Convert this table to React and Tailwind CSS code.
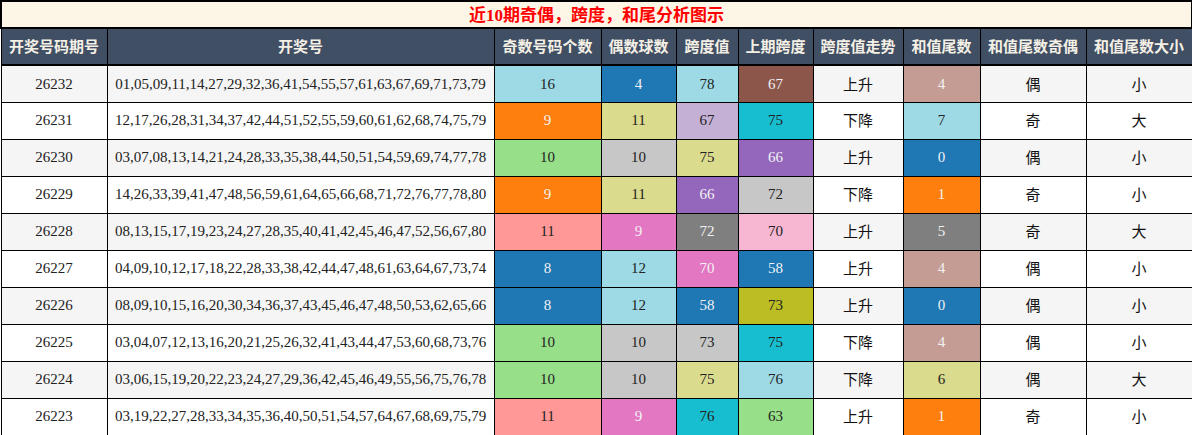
import React from "react";

const D = "text-[#f2f2f2]";
const L = "text-[#222222]";
const C = {
  lc: `bg-[#9edae5] ${L}`,
  bl: `bg-[#1f77b4] ${D}`,
  br: `bg-[#8c564b] ${D}`,
  lb: `bg-[#c49c94] ${D}`,
  or: `bg-[#ff7f0e] ${D}`,
  lo: `bg-[#dbdb8d] ${L}`,
  lp: `bg-[#c5b0d5] ${L}`,
  cy: `bg-[#17becf] ${L}`,
  lg: `bg-[#98df8a] ${L}`,
  gr: `bg-[#c7c7c7] ${L}`,
  pu: `bg-[#9467bd] ${D}`,
  lr: `bg-[#ff9896] ${L}`,
  pk: `bg-[#e377c2] ${D}`,
  dg: `bg-[#7f7f7f] ${D}`,
  lk: `bg-[#f7b6d2] ${L}`,
  ol: `bg-[#bcbd22] ${L}`,
};

const rows = [
  ["26232", "01,05,09,11,14,27,29,32,36,41,54,55,57,61,63,67,69,71,73,79", [16, C.lc], [4, C.bl], [78, C.lc], [67, C.br], "上升", [4, C.lb], "偶", "小"],
  ["26231", "12,17,26,28,31,34,37,42,44,51,52,55,59,60,61,62,68,74,75,79", [9, C.or], [11, C.lo], [67, C.lp], [75, C.cy], "下降", [7, C.lc], "奇", "大"],
  ["26230", "03,07,08,13,14,21,24,28,33,35,38,44,50,51,54,59,69,74,77,78", [10, C.lg], [10, C.gr], [75, C.lo], [66, C.pu], "上升", [0, C.bl], "偶", "小"],
  ["26229", "14,26,33,39,41,47,48,56,59,61,64,65,66,68,71,72,76,77,78,80", [9, C.or], [11, C.lo], [66, C.pu], [72, C.gr], "下降", [1, C.or], "奇", "小"],
  ["26228", "08,13,15,17,19,23,24,27,28,35,40,41,42,45,46,47,52,56,67,80", [11, C.lr], [9, C.pk], [72, C.dg], [70, C.lk], "上升", [5, C.dg], "奇", "大"],
  ["26227", "04,09,10,12,17,18,22,28,33,38,42,44,47,48,61,63,64,67,73,74", [8, C.bl], [12, C.lc], [70, C.pk], [58, C.bl], "上升", [4, C.lb], "偶", "小"],
  ["26226", "08,09,10,15,16,20,30,34,36,37,43,45,46,47,48,50,53,62,65,66", [8, C.bl], [12, C.lc], [58, C.bl], [73, C.ol], "上升", [0, C.bl], "偶", "小"],
  ["26225", "03,04,07,12,13,16,20,21,25,26,32,41,43,44,47,53,60,68,73,76", [10, C.lg], [10, C.gr], [73, C.gr], [75, C.cy], "下降", [4, C.lb], "偶", "小"],
  ["26224", "03,06,15,19,20,22,23,24,27,29,36,42,45,46,49,55,56,75,76,78", [10, C.lg], [10, C.gr], [75, C.lo], [76, C.lc], "下降", [6, C.lo], "偶", "大"],
  ["26223", "03,19,22,27,28,33,34,35,36,40,50,51,54,57,64,67,68,69,75,79", [11, C.lr], [9, C.pk], [76, C.cy], [63, C.lg], "上升", [1, C.or], "奇", "小"],
];

const cols = ["w-[106px]", "w-[387px]", "w-[107px]", "w-[75px]", "w-[62px]", "w-[75px]", "w-[90px]", "w-[77px]", "w-[106px]", "w-[106px]"];
const heads = ["开奖号码期号", "开奖号", "奇数号码个数", "偶数球数", "跨度值", "上期跨度", "跨度值走势", "和值尾数", "和值尾数奇偶", "和值尾数大小"];

const SERIF = "font-['Liberation_Serif','Times_New_Roman',serif]";
const SANS = "font-['Noto_Sans_CJK_SC','Noto_Sans',sans-serif]";

function NumCell({ v }) {
  const [n, cls] = v;
  return <td className={`border border-black text-center text-[15px] ${SERIF} ${cls}`}>{n}</td>;
}

function CnCell({ t }) {
  return <td className={`border border-black text-center text-[15px] text-[#111111] ${SANS}`}>{t}</td>;
}

export default function App() {
  return (
    <div className="w-[1192px] h-[435px] bg-white overflow-hidden">
      <table className="table-fixed border-collapse w-[1191px]">
        <colgroup>
          {cols.map((c, i) => (
            <col key={i} className={c} />
          ))}
        </colgroup>
        <tbody>
          <tr className="h-[27px]">
            <td
              colSpan={10}
              className={`border-2 border-black bg-[#fdf5e6] text-center text-[17px] font-bold text-[#ff0000] leading-none ${SANS}`}
            >
              近<span className={SERIF}>10</span>期奇偶，跨度，和尾分析图示
            </td>
          </tr>
          <tr className="h-[37px]">
            {heads.map((h, i) => (
              <td
                key={i}
                className={`border border-black border-b-2 bg-[#404f63] text-center text-[15px] font-bold text-[#f5f0e6] ${SANS}`}
              >
                {h}
              </td>
            ))}
          </tr>
          {rows.map((r, i) => (
            <tr key={i} className={`h-[37px] ${i % 2 === 0 ? "bg-[#f5f5f5]" : "bg-white"}`}>
              <td className={`border border-black text-center text-[15px] text-[#222222] ${SERIF}`}>{r[0]}</td>
              <td className={`border border-black text-center text-[15px] text-[#222222] whitespace-nowrap ${SERIF}`}>{r[1]}</td>
              <NumCell v={r[2]} />
              <NumCell v={r[3]} />
              <NumCell v={r[4]} />
              <NumCell v={r[5]} />
              <CnCell t={r[6]} />
              <NumCell v={r[7]} />
              <CnCell t={r[8]} />
              <CnCell t={r[9]} />
            </tr>
          ))}
        </tbody>
      </table>
    </div>
  );
}
